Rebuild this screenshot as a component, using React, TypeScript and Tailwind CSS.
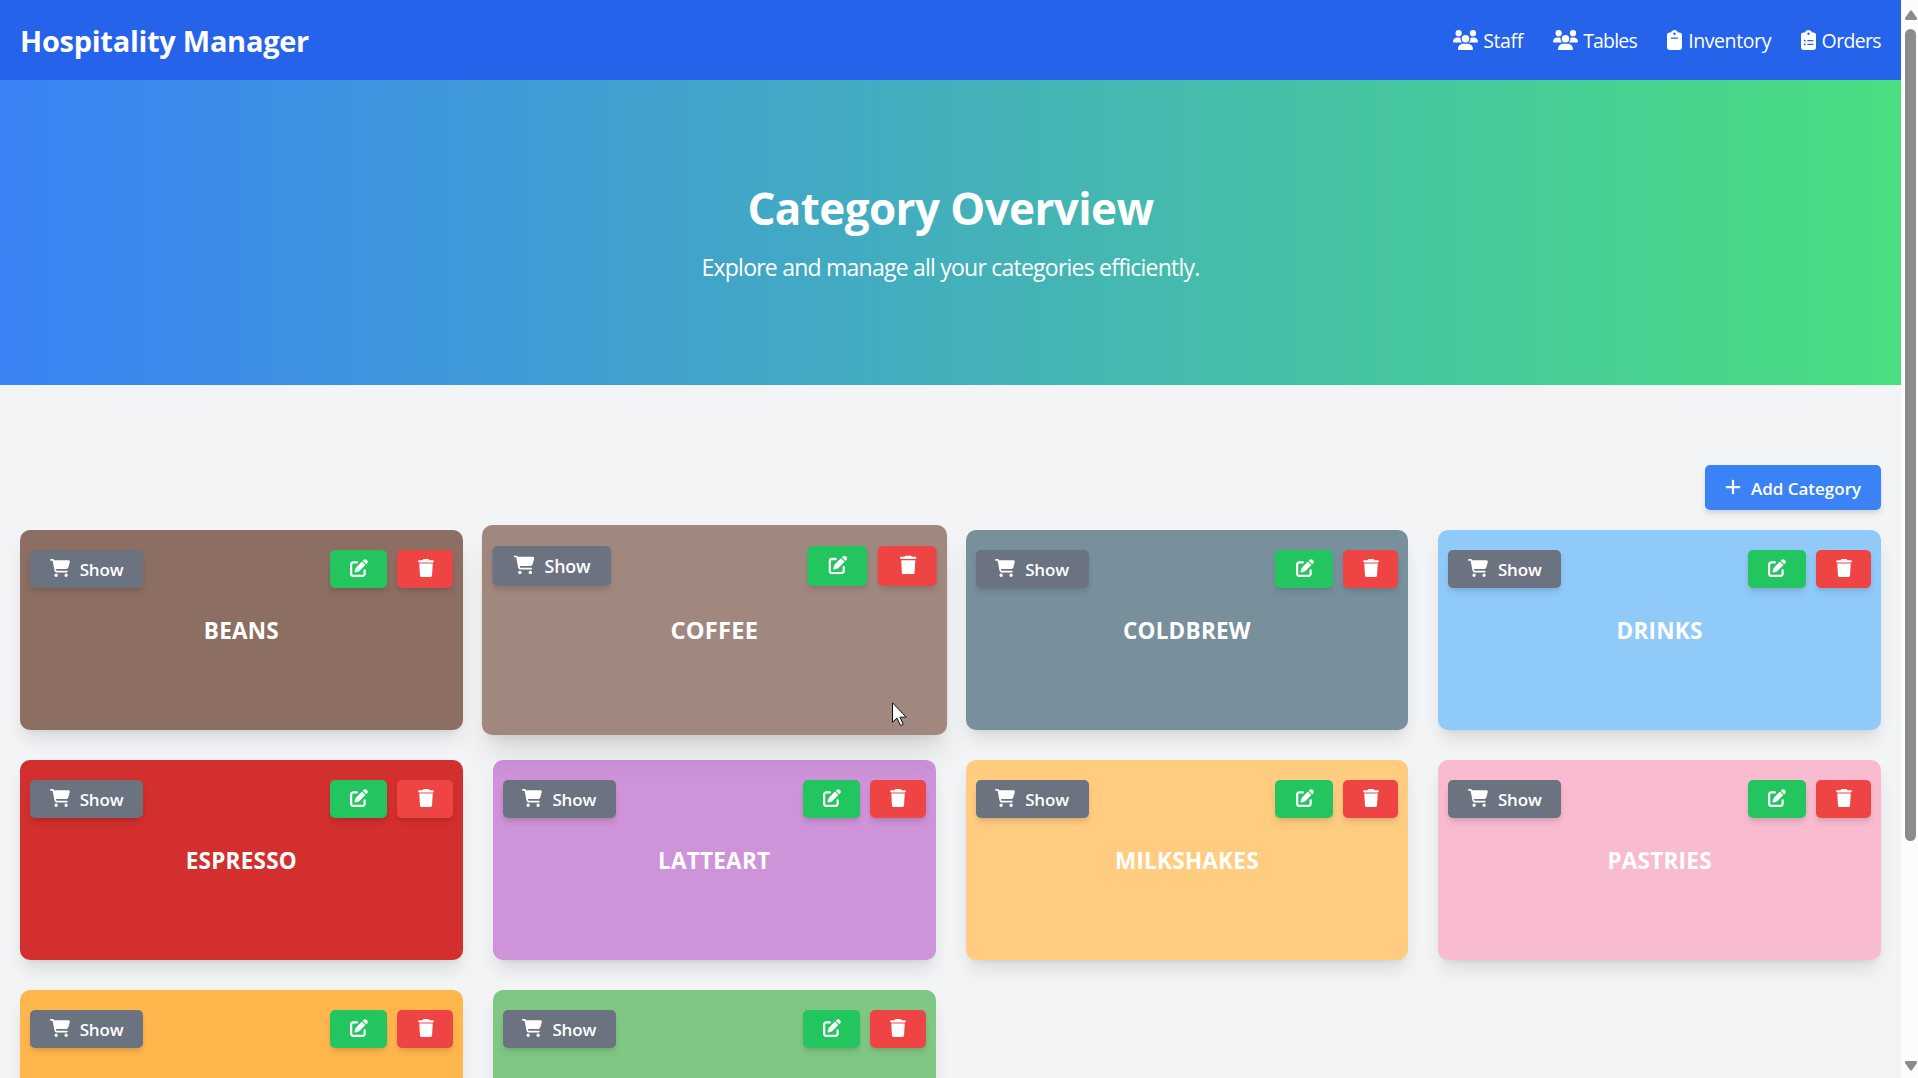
import { FaUsers, FaClipboard, FaClipboardList, FaPlus, FaCartShopping, FaPenToSquare, FaTrash } from "react-icons/fa6";

const nav = [
  { label: "Staff", Icon: FaUsers, box: "w-[70px]", icon: "w-[25px]", text: "tracking-[-0.35px]" },
  { label: "Tables", Icon: FaUsers, box: "w-[84px]", icon: "w-[25px]", text: "tracking-[-0.8px]" },
  { label: "Inventory", Icon: FaClipboard, box: "w-[104px]", icon: "w-[15px]", text: "tracking-[-0.4px]" },
  { label: "Orders", Icon: FaClipboardList, box: "w-20", icon: "w-[15px]", text: "tracking-[-0.65px]" },
];

const categories = [
  { id: 1, name: "BEANS", color: "bg-[#8d6e63]" },
  { id: 2, name: "COFFEE", color: "bg-[#a1887f]", active: true },
  { id: 3, name: "COLDBREW", color: "bg-[#78909c]" },
  { id: 4, name: "DRINKS", color: "bg-[#90caf9]" },
  { id: 5, name: "ESPRESSO", color: "bg-[#d32f2f]" },
  { id: 6, name: "LATTEART", color: "bg-[#ce93d8]" },
  { id: 7, name: "MILKSHAKES", color: "bg-[#ffcc80]" },
  { id: 8, name: "PASTRIES", color: "bg-[#f8bbd0]" },
  { id: 9, color: "bg-[#ffb74d]" },
  { id: 10, color: "bg-[#81c784]" },
];

const buttonBase =
  "flex items-center justify-center rounded-[5px] text-white shadow-[0_5px_7.5px_-1.25px_rgba(0,0,0,0.1),0_2.5px_5px_-2.5px_rgba(0,0,0,0.1)]";

function CategoryCard({ name, color, active }: { name?: string; color: string; active?: boolean }) {
  return (
    <div
      className={`${color} relative flex h-[200px] items-center justify-center rounded-[10px] ${
        active
          ? "z-10 scale-105 shadow-[0_25px_31.25px_-6.25px_rgba(0,0,0,0.1),0_10px_12.5px_-7.5px_rgba(0,0,0,0.1)]"
          : "shadow-[0_12.5px_18.75px_-3.75px_rgba(0,0,0,0.1),0_5px_7.5px_-5px_rgba(0,0,0,0.1)]"
      }`}
    >
      <div className="absolute inset-x-2.5 top-5 flex justify-between">
        <button className={`${buttonBase} h-[38px] w-[113px] gap-2.5 bg-[#6b7280]`}>
          <FaCartShopping className="-mt-0.5 h-[18px] w-5" />
          <span className="pt-px text-[17px] font-semibold tracking-[-0.2px]">Show</span>
        </button>
        <div className="flex gap-2.5">
          <button className={`${buttonBase} h-[38px] w-[57.5px] bg-[#22c55e] pl-px`}>
            <FaPenToSquare className="-mt-0.5 h-[18px] w-[18px]" />
          </button>
          <button className={`${buttonBase} h-[38px] w-[55.3px] bg-[#ef4444] pl-px`}>
            <FaTrash className="-mt-0.5 h-[18px] w-4" />
          </button>
        </div>
      </div>
      {name && (
        <h2 className="pt-[3px] text-[22.5px] leading-none font-bold tracking-[0.25px] text-white">{name}</h2>
      )}
    </div>
  );
}

function Scrollbar() {
  return (
    <div className="flex h-full w-[17px] shrink-0 flex-col items-center bg-[#fcfcfc] pt-2.5 pb-[7px] pl-[2px]">
      <svg className="h-2.5 w-3" viewBox="0 0 12 10" fill="#8b8b8b">
        <path d="M5 1Q6 -.5 7 1L12 8Q12.3 10 11 10H1Q-.3 10 0 8Z" />
      </svg>
      <div className="mt-[9px] h-[812px] w-[11px] rounded-full bg-[#8b8b8b]" />
      <svg className="mt-auto h-2.5 w-3" viewBox="0 0 12 10" fill="#8b8b8b">
        <path d="M5 9Q6 10.5 7 9L12 2Q12.3 0 11 0H1Q-.3 0 0 2Z" />
      </svg>
    </div>
  );
}

export default function App() {
  return (
    <div className="flex h-[1078px] w-full overflow-hidden font-['Open_Sans','Noto_Sans',sans-serif] [font-variant-ligatures:none]">
      <div className="relative h-full min-w-0 flex-1 overflow-hidden bg-[#f3f4f6]">
        <header className="flex h-20 items-center justify-between bg-[#2563eb] px-5 text-white">
          <h1 className="pt-0.5 text-[29px] font-bold tracking-[-0.28px] whitespace-nowrap">Hospitality Manager</h1>
          <nav className="flex gap-[30px]">
            {nav.map(({ label, Icon, box, icon, text }) => (
              <a key={label} className={`${box} flex items-center justify-between whitespace-nowrap`}>
                <Icon className={`${icon} h-5 shrink-0`} />
                <span className={`${text} pt-0.5 text-[19.5px]`}>{label}</span>
              </a>
            ))}
          </nav>
        </header>
        <section className="flex h-[305px] flex-col items-center bg-[linear-gradient(to_right,#3b82f6,#4ade80)] pt-[103px] text-white">
          <h2 className="text-[44px] leading-[50px] font-bold tracking-[-0.6px]">Category Overview</h2>
          <p className="mt-[17px] text-[23px] leading-[35px] tracking-[-0.77px]">
            Explore and manage all your categories efficiently.
          </p>
        </section>
        <main className="px-5 pt-20">
          <div className="flex justify-end">
            <button className={`${buttonBase} h-[45px] w-44 gap-2.5 bg-[#3b82f6]`}>
              <FaPlus className="-mt-0.5 h-[18px] w-4" />
              <span className="pt-0.5 text-[17px] font-semibold">Add Category</span>
            </button>
          </div>
          <div className="mt-5 grid grid-cols-4 gap-[30px]">
            {categories.map(({ id, ...category }) => (
              <CategoryCard key={id} {...category} />
            ))}
          </div>
        </main>
        <svg className="absolute top-[702px] left-[892px] z-20 h-[25px] w-4" viewBox="0 0 16 25">
          <path d="M.5.8V20.2L5 16.2L8.6 23.6L11.2 22.4L8 15.2H14.2Z" fill="#fff" stroke="#111" />
        </svg>
      </div>
      <Scrollbar />
    </div>
  );
}
